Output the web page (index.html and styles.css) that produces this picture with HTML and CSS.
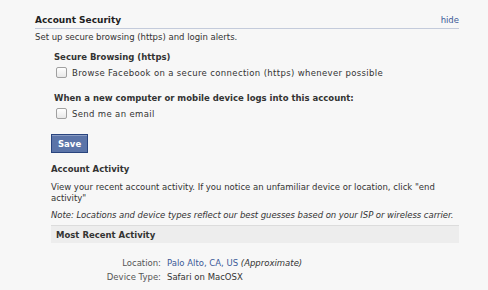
FILE: index.html
```html
<!DOCTYPE html>
<html>
<head>
<meta charset="utf-8">
<link rel="stylesheet" href="styles.css">
</head>
<body>
<div class="panel">
  <div class="header">
    <span class="title">Account Security</span>
    <a class="hide">hide</a>
  </div>
  <div class="intro">Set up secure browsing (https) and login alerts.</div>
  <div class="group">
    <div class="label">Secure Browsing (https)</div>
    <div class="check"><span class="box"></span><span>Browse Facebook on a secure connection (https) whenever possible</span></div>
  </div>
  <div class="group group2">
    <div class="label">When a new computer or mobile device logs into this account:</div>
    <div class="check"><span class="box"></span><span>Send me an email</span></div>
  </div>
  <div class="activity">
    <button class="save">Save</button>
    <div class="subtitle">Account Activity</div>
    <p class="desc">View your recent account activity. If you notice an unfamiliar device or location, click "end activity"</p>
    <p class="note">Note: Locations and device types reflect our best guesses based on your ISP or wireless carrier.</p>
    <div class="bar">Most Recent Activity</div>
    <div class="details">
      <div class="key">Location:</div><div class="val"><a class="link">Palo Alto, CA, US</a> <em>(Approximate)</em></div>
      <div class="key">Device Type:</div><div class="val">Safari on MacOSX</div>
    </div>
  </div>
</div>
</body>
</html>
```
FILE: styles.css
```css
html, body { margin: 0; padding: 0; }
body {
  background: #f7f7f7;
  font-family: "DejaVu Sans", "Liberation Sans", sans-serif;
  font-size: 8.5px;
  color: #333;
  width: 488px;
  height: 290px;
  overflow: hidden;
}
.panel { padding: 15px 29px 0 35px; }
.header {
  display: flex;
  justify-content: space-between;
  align-items: flex-end;
  border-bottom: 1px solid #c4cbdb;
  padding-bottom: 3px;
}
.title { font-weight: bold; font-size: 9px; color: #222; }
.hide { color: #3b5998; font-size: 8.5px; }
.intro { margin-top: 3px; }
.group { padding-left: 19px; margin-top: 10px; }
.group2 { margin-top: 15px; }
.label { font-weight: bold; color: #333; }
.check { display: flex; align-items: center; gap: 5px; margin-top: 5px; padding-left: 2px; letter-spacing: 0.35px; }
.box {
  width: 9px; height: 9px;
  border: 1px solid #a0a0a0;
  border-radius: 2px;
  background: linear-gradient(#fff, #e8e8e8);
  flex: none;
}
.activity { padding-left: 16px; margin-top: 15px; }
.save {
  display: block;
  font-family: inherit;
  font-size: 8.5px;
  font-weight: bold;
  color: #fff;
  background: #5b74a8;
  border: 1px solid #29447e;
  box-shadow: inset 0 1px 0 #8a9cc2;
  padding: 3px 6px;
  height: 19px;
  border-radius: 0;
}
.subtitle { font-weight: bold; margin-top: 11px; }
.desc { margin: 8px 0 0; line-height: 11px; }
.note { margin: 6px 0 0; font-style: italic; letter-spacing: -0.05px; }
.bar {
  margin-top: 5px;
  border-top: 1px solid #dcdcdc;
  background: #ededed;
  font-weight: bold;
  padding: 4px 5px 3px;
  height: 10px;
}
.details {
  display: grid;
  grid-template-columns: 110px auto;
  column-gap: 6px;
  row-gap: 4px;
  margin-top: 15px;
}
.key { text-align: right; color: #555; }
.link { color: #3b5998; }
em { color: #333; }
```
